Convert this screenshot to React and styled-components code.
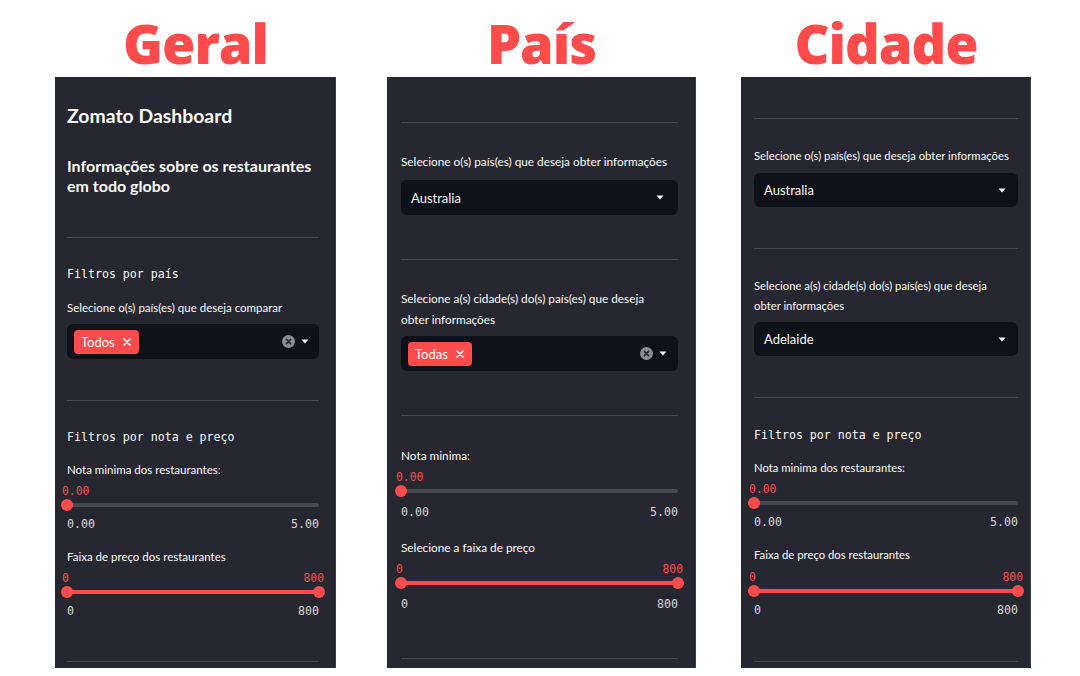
import React from 'react';
import styled, { createGlobalStyle } from 'styled-components';

const GlobalStyle = createGlobalStyle`
  * {
    box-sizing: border-box;
  }

  body {
    margin: 0;
    background: #ffffff;
    font-family: Lato, "Noto Sans", sans-serif;
  }
`;

const Page = styled.main`
  display: flex;
  align-items: flex-start;
  width: 1080px;
  height: 676px;
  padding-left: 55px;
`;

const Column = styled.section`
  display: flex;
  flex-direction: column;
  width: ${props => props.$width}px;
  height: 668px;
  margin-left: ${props => props.$gap || 0}px;
`;

const Title = styled.h1`
  margin: 0;
  height: 77px;
  padding-top: 9px;
  font-family: 'Open Sans', sans-serif;
  font-size: 54px;
  font-weight: 800;
  line-height: 68px;
  letter-spacing: -1px;
  color: #ff4b4b;
  text-align: center;
`;

const Sidebar = styled.aside`
  flex: 1;
  display: flex;
  flex-direction: column;
  padding: 0 ${props => props.$right}px 0 ${props => props.$left}px;
  background: #262730;
  border-right: 1px solid #3b3c47;
  font-size: ${props => props.$fs}px;
  overflow: hidden;
`;

const Heading = styled.h2`
  margin: ${props => props.$mt}px 0 0;
  font-size: 19.4px;
  font-weight: 700;
  line-height: 24px;
  color: #fafafa;
`;

const SubHeading = styled.h3`
  margin: ${props => props.$mt}px 0 0;
  font-size: 16px;
  font-weight: 700;
  line-height: 20px;
  color: #fafafa;
`;

const Divider = styled.hr`
  flex: none;
  height: 0;
  margin: ${props => props.$mt}px 0 0;
  border: 0;
  border-top: 1px solid rgba(250, 250, 250, 0.17);
`;

const Caption = styled.p`
  margin: ${props => props.$mt}px 0 0;
  font-family: 'DejaVu Sans Mono', 'Liberation Mono', monospace;
  font-size: 11.6px;
  line-height: 18px;
  color: #fafafa;
`;

const Label = styled.label`
  display: block;
  margin-top: ${props => props.$mt}px;
  font-size: 1em;
  line-height: ${props => props.$lh || 20}px;
  white-space: nowrap;
  color: #fafafa;
`;

const SelectBox = styled.div`
  display: flex;
  flex: none;
  align-items: center;
  height: ${props => props.$h || 35}px;
  margin-top: ${props => props.$mt}px;
  padding: 0 ${props => props.$pr}px 0 ${props => props.$pl}px;
  border-radius: 6px;
  background: #0e1117;
  font-size: 13px;
  color: #fafafa;
`;

const SelectValue = styled.span`
  flex: 1;
`;

const Chip = styled.span`
  display: inline-flex;
  align-items: center;
  height: 24px;
  padding: 0 8px 0 7px;
  border-radius: 4px;
  background: #ff4b4b;
  font-size: 13px;
  color: #ffffff;

  & > svg {
    margin-left: 8px;
  }
`;

const Spacer = styled.span`
  flex: 1;
`;

const Controls = styled.span`
  display: flex;
  align-items: center;
  gap: 6px;
`;

const SliderBlock = styled.div`
  flex: none;
  margin-top: ${props => props.$mt}px;
`;

const ValueRow = styled.div`
  display: flex;
  justify-content: space-between;
  height: 14px;
  margin: 0 -5px;
  font-family: 'DejaVu Sans Mono', 'Liberation Mono', monospace;
  font-size: 11.4px;
  line-height: 14px;
  color: #ff4b4b;
`;

const Track = styled.div`
  display: flex;
  align-items: center;
  height: 14px;
  margin: 0 ${props => (props.$range ? -6 : 0)}px 0 -6px;
`;

const Thumb = styled.span`
  position: relative;
  z-index: 1;
  flex: none;
  width: 12px;
  height: 12px;
  border-radius: 50%;
  background: #ff4b4b;
`;

const Rail = styled.span`
  flex: 1;
  height: 4px;
  margin: 0 ${props => (props.$range ? -6 : 0)}px 0 -6px;
  border-radius: 2px;
  background: ${props => (props.$filled ? '#ff4b4b' : '#474954')};
`;

const TickRow = styled.div`
  display: flex;
  justify-content: space-between;
  margin-top: ${props => props.$gap}px;
  font-family: 'DejaVu Sans Mono', 'Liberation Mono', monospace;
  font-size: 11.6px;
  line-height: 18px;
  color: #d6d8dd;
`;

const ChipClose = () => (
  <svg width="8" height="8" viewBox="0 0 8 8">
    <path d="M1 1L7 7M7 1L1 7" stroke="#ffffff" strokeWidth="1.6" strokeLinecap="round" />
  </svg>
);

const ClearIcon = () => (
  <svg width="13" height="13" viewBox="0 0 13 13">
    <circle cx="6.5" cy="6.5" r="6.5" fill="#8b8d97" />
    <path d="M4.4 4.4L8.6 8.6M8.6 4.4L4.4 8.6" stroke="#262730" strokeWidth="1.5" strokeLinecap="round" />
  </svg>
);

const Caret = () => (
  <svg width="8" height="5" viewBox="0 0 8 5">
    <path d="M0.5 0.5H7.5L4 4.5Z" fill="#fafafa" />
  </svg>
);

const Select = ({ value, mt, h, pr }) => (
  <SelectBox $mt={mt} $h={h} $pl={10} $pr={pr}>
    <SelectValue>{value}</SelectValue>
    <Caret />
  </SelectBox>
);

const MultiSelect = ({ value, mt, pr }) => (
  <SelectBox $mt={mt} $pl={7} $pr={pr}>
    <Chip>
      {value}
      <ChipClose />
    </Chip>
    <Spacer />
    <Controls>
      <ClearIcon />
      <Caret />
    </Controls>
  </SelectBox>
);

const Slider = ({ mt, range, min, max, tickGap = 3 }) => (
  <SliderBlock $mt={mt}>
    <ValueRow>
      <span>{min}</span>
      {range && <span>{max}</span>}
    </ValueRow>
    <Track $range={range}>
      <Thumb />
      <Rail $range={range} $filled={range} />
      {range && <Thumb />}
    </Track>
    <TickRow $gap={tickGap}>
      <span>{min}</span>
      <span>{max}</span>
    </TickRow>
  </SliderBlock>
);

const App = () => {
  return (
    <Page>
      <GlobalStyle />

      <Column $width={281}>
        <Title>Geral</Title>
        <Sidebar $left={12} $right={16} $fs={11.5}>
          <Heading $mt={27}>Zomato Dashboard</Heading>
          <SubHeading $mt={28}>
            Informações sobre os restaurantes em todo globo
          </SubHeading>
          <Divider $mt={41} />
          <Caption $mt={27}>Filtros por país</Caption>
          <Label $mt={15}>Selecione o(s) país(es) que deseja comparar</Label>
          <MultiSelect value="Todos" mt={6} pr={10} />
          <Divider $mt={41} />
          <Caption $mt={27}>Filtros por nota e preço</Caption>
          <Label $mt={14}>Nota minima dos restaurantes:</Label>
          <Slider mt={4} min="0.00" max="5.00" />
          <Label $mt={14}>Faixa de preço dos restaurantes</Label>
          <Slider mt={4} range min="0" max="800" />
          <Divider $mt={41} />
        </Sidebar>
      </Column>

      <Column $width={309} $gap={51}>
        <Title>País</Title>
        <Sidebar $left={14} $right={17} $fs={11.8}>
          <Divider $mt={45} />
          <Label $mt={29}>Selecione o(s) país(es) que deseja obter informações</Label>
          <Select value="Australia" mt={8} pr={14} />
          <Divider $mt={44} />
          <Label $mt={28} $lh={21}>
            Selecione a(s) cidade(s) do(s) país(es) que deseja
            <br />
            obter informações
          </Label>
          <MultiSelect value="Todas" mt={6} pr={11} />
          <Divider $mt={44} />
          <Label $mt={30}>Nota minima:</Label>
          <Slider mt={4} min="0.00" max="5.00" tickGap={5} />
          <Label $mt={17}>Selecione a faixa de preço</Label>
          <Slider mt={4} range min="0" max="800" tickGap={5} />
          <Divider $mt={45} />
        </Sidebar>
      </Column>

      <Column $width={290} $gap={45}>
        <Title>Cidade</Title>
        <Sidebar $left={13} $right={12} $fs={11.3}>
          <Divider $mt={41} />
          <Label $mt={27}>Selecione o(s) país(es) que deseja obter informações</Label>
          <Select value="Australia" mt={7} h={34} pr={12} />
          <Divider $mt={41} />
          <Label $mt={27}>
            Selecione a(s) cidade(s) do(s) país(es) que deseja
            <br />
            obter informações
          </Label>
          <Select value="Adelaide" mt={6} h={34} pr={12} />
          <Divider $mt={41} />
          <Caption $mt={28}>Filtros por nota e preço</Caption>
          <Label $mt={14}>Nota minima dos restaurantes:</Label>
          <Slider mt={4} min="0.00" max="5.00" />
          <Label $mt={14}>Faixa de preço dos restaurantes</Label>
          <Slider mt={5} range min="0" max="800" />
          <Divider $mt={42} />
        </Sidebar>
      </Column>
    </Page>
  );
};

export default App;
